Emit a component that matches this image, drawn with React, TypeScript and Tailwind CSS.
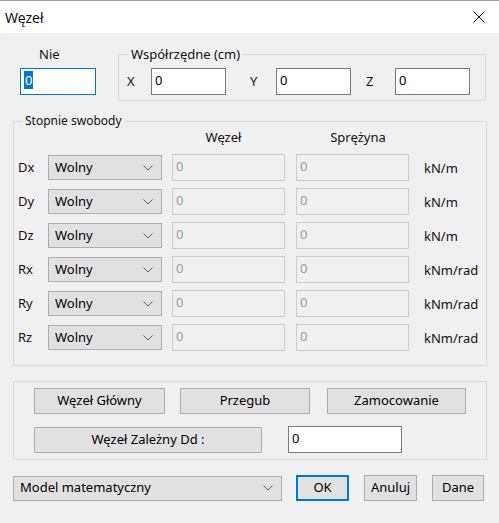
import React from 'react';

const font = "font-['Noto_Sans','Liberation_Sans',sans-serif]";

function Chevron() {
  return (
    <svg width="10" height="6" viewBox="0 0 10 6" fill="none">
      <path d="M0.5 0.5 L5 5 L9.5 0.5" stroke="#5f5f5f" strokeWidth="1" />
    </svg>
  );
}

function Combo({ label, width }: { label: string; width: string }) {
  return (
    <div
      className={`${width} h-[25px] flex items-center justify-between pl-[6px] pr-[8px] bg-[#e1e1e1] border border-[#adadad] text-black`}
    >
      <span>{label}</span>
      <Chevron />
    </div>
  );
}

function Edit({
  value,
  width,
  disabled,
  focused,
}: {
  value: string;
  width: string;
  disabled?: boolean;
  focused?: boolean;
}) {
  const box = disabled
    ? 'bg-[#f0f0f0] border-[#cccccc] text-[#9a9a9a]'
    : focused
      ? 'bg-white border-[#0078d7] text-black'
      : 'bg-white border-[#7a7a7a] text-black';
  return (
    <div className={`${width} h-[27px] border ${box} pl-[3px] pt-[3px] leading-[16px]`}>
      {focused ? <span className="bg-[#0078d7] text-white px-[1px]">{value}</span> : value}
    </div>
  );
}

function Button({
  label,
  width,
  def,
}: {
  label: string;
  width: string;
  def?: boolean;
}) {
  return (
    <div
      className={`${width} h-[26px] flex items-center justify-center bg-[#e1e1e1] text-black ${
        def ? 'border-2 border-[#0078d7]' : 'border border-[#adadad]'
      }`}
    >
      {label}
    </div>
  );
}

const rows = [
  { dof: 'Dx', unit: 'kN/m' },
  { dof: 'Dy', unit: 'kN/m' },
  { dof: 'Dz', unit: 'kN/m' },
  { dof: 'Rx', unit: 'kNm/rad' },
  { dof: 'Ry', unit: 'kNm/rad' },
  { dof: 'Rz', unit: 'kNm/rad' },
];

export default function App() {
  return (
    <div className={`w-[499px] h-[523px] flex flex-col bg-[#f0f0f0] text-[13px] text-[#111] ${font} overflow-hidden`}>
      {/* Title bar */}
      <div className="h-[33px] shrink-0 flex items-center justify-between bg-white border-t border-[#9a9a9a] pl-[5px] pr-[14px]">
        <span className="text-[14px]">Węzeł</span>
        <svg width="12" height="12" viewBox="0 0 12 12">
          <path d="M0.5 0.5 L11.5 11.5 M11.5 0.5 L0.5 11.5" stroke="#111" strokeWidth="1" />
        </svg>
      </div>

      <div className="flex flex-col pl-[13px]">
        {/* Nie + coordinates */}
        <div className="flex mt-[13px]">
          <div className="flex flex-col ml-[7px] w-[76px]">
            <span className="h-[16px] leading-[16px] pl-[19px]">Nie</span>
            <div className="mt-[6px]">
              <Edit value="0" width="w-[76px]" focused />
            </div>
          </div>
          <fieldset className="ml-[22px] w-[368px] border border-[#dcdcdc] pb-[5px]">
            <legend className="ml-[10px] px-[2px] h-[16px] leading-[16px]">Współrzędne (cm)</legend>
            <div className="flex items-center pt-[6px] pl-[8px]">
              <span className="w-[24px]">X</span>
              <Edit value="0" width="w-[75px]" />
              <span className="ml-[24px] w-[26px]">Y</span>
              <Edit value="0" width="w-[75px]" />
              <span className="ml-[15px] w-[29px]">Z</span>
              <Edit value="0" width="w-[75px]" />
            </div>
          </fieldset>
        </div>

        {/* Degrees of freedom */}
        <fieldset className="mt-[12px] w-[474px] border border-[#dcdcdc] pb-[15px]">
          <legend className="ml-[9px] px-[2px] h-[16px] leading-[16px] text-[12px]">Stopnie swobody</legend>
          <div className="flex h-[16px] leading-[16px]">
            <span className="ml-[158px] w-[103px] text-center">Węzeł</span>
            <span className="ml-[21px] w-[124px] text-center">Sprężyna</span>
          </div>
          <div className="flex flex-col gap-[9px] mt-[10px] pl-[4px]">
            {rows.map((r) => (
              <div key={r.dof} className="flex items-center h-[25px]">
                <span className="w-[30px]">{r.dof}</span>
                <Combo label="Wolny" width="w-[114px]" />
                <div className="ml-[10px]">
                  <Edit value="0" width="w-[113px]" disabled />
                </div>
                <div className="ml-[11px]">
                  <Edit value="0" width="w-[113px]" disabled />
                </div>
                <span className="ml-[15px] mt-[3px]">{r.unit}</span>
              </div>
            ))}
          </div>
        </fieldset>

        {/* Node type buttons */}
        <fieldset className="mt-[15px] w-[474px] border border-[#dcdcdc] pt-[6px] pb-[6px] pl-[20px]">
          <div className="flex">
            <Button label="Węzeł Główny" width="w-[131px]" />
            <div className="ml-[15px]">
              <Button label="Przegub" width="w-[130px]" />
            </div>
            <div className="ml-[17px]">
              <Button label="Zamocowanie" width="w-[139px]" />
            </div>
          </div>
          <div className="flex items-center mt-[12px]">
            <Button label="Węzeł Zależny Dd :" width="w-[228px]" />
            <div className="ml-[26px]">
              <Edit value="0" width="w-[114px]" />
            </div>
          </div>
        </fieldset>

        {/* Bottom row */}
        <div className="flex items-center mt-[15px]">
          <Combo label="Model matematyczny" width="w-[269px]" />
          <div className="ml-[14px]">
            <Button label="OK" width="w-[53px]" def />
          </div>
          <div className="ml-[15px]">
            <Button label="Anuluj" width="w-[53px]" />
          </div>
          <div className="ml-[15px]">
            <Button label="Dane" width="w-[52px]" />
          </div>
        </div>
      </div>
    </div>
  );
}
